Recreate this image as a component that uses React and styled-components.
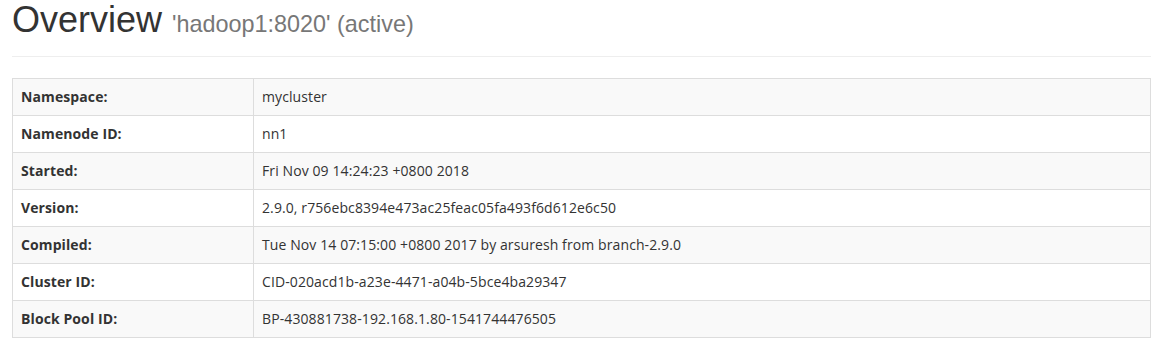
import React from 'react';
import styled, { createGlobalStyle } from 'styled-components';

const GlobalStyle = createGlobalStyle`
  body {
    margin: 0;
    background: #fff;
    color: #333;
    font-family: "Open Sans", "Noto Sans", sans-serif;
    font-size: 14px;
  }
`;

const Page = styled.div`
  padding: 0 10px 0 12px;
`;

const PageHeader = styled.div`
  padding-bottom: 16px;
  margin-bottom: 21px;
  border-bottom: 1px solid #eee;
`;

const Title = styled.h1`
  margin: 0;
  font-family: "Liberation Sans", Arial, sans-serif;
  font-size: 36px;
  font-weight: 500;
  line-height: 1.1;
  color: #333;
`;

const Subtitle = styled.small`
  font-size: 65%;
  font-weight: normal;
  color: #777;
`;

const Table = styled.table`
  width: 100%;
  border-collapse: collapse;
  border: 1px solid #ddd;
  letter-spacing: 0.1px;
`;

const Row = styled.tr`
  background: ${p => (p.$striped ? '#f9f9f9' : '#fff')};
`;

const Label = styled.th`
  width: 224px;
  padding: 8px;
  text-align: left;
  font-weight: bold;
  line-height: 20px;
  border: 1px solid #ddd;
`;

const Value = styled.td`
  padding: 8px;
  line-height: 20px;
  border: 1px solid #ddd;
`;

const rows = [
  ['Namespace:', 'mycluster'],
  ['Namenode ID:', 'nn1'],
  ['Started:', 'Fri Nov 09 14:24:23 +0800 2018'],
  ['Version:', '2.9.0, r756ebc8394e473ac25feac05fa493f6d612e6c50'],
  ['Compiled:', 'Tue Nov 14 07:15:00 +0800 2017 by arsuresh from branch-2.9.0'],
  ['Cluster ID:', 'CID-020acd1b-a23e-4471-a04b-5bce4ba29347'],
  ['Block Pool ID:', 'BP-430881738-192.168.1.80-1541744476505'],
];

export default function App() {
  return (
    <Page>
      <GlobalStyle />
      <PageHeader>
        <Title>
          Overview <Subtitle>'hadoop1:8020' (active)</Subtitle>
        </Title>
      </PageHeader>
      <Table>
        <tbody>
          {rows.map(([label, value], i) => (
            <Row key={label} $striped={i % 2 === 0}>
              <Label>{label}</Label>
              <Value>{value}</Value>
            </Row>
          ))}
        </tbody>
      </Table>
    </Page>
  );
}
